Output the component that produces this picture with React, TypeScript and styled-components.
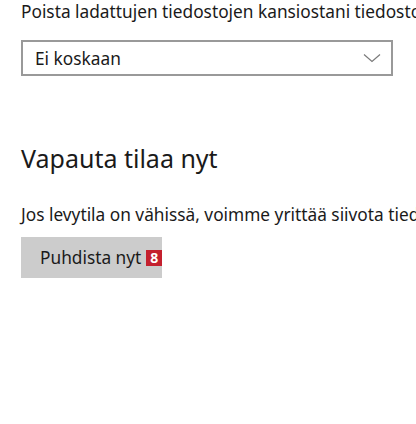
import React from 'react';
import styled, { createGlobalStyle } from 'styled-components';

const GlobalStyle = createGlobalStyle`
  html, body {
    margin: 0;
    padding: 0;
    background: #ffffff;
  }
  body {
    font-family: "Noto Sans", "Open Sans", sans-serif;
    color: #1a1a1a;
    overflow: hidden;
  }
`;

const Page = styled.div`
  width: 416px;
  height: 424px;
  padding: 0 0 0 21px;
  box-sizing: border-box;
  overflow: hidden;
  background: #ffffff;
`;

const Label = styled.div`
  font-size: 17.3px;
  line-height: 24px;
  white-space: nowrap;
  color: #1a1a1a;
`;

const Select = styled.div`
  margin-top: 16px;
  width: 372px;
  height: 36px;
  box-sizing: border-box;
  border: 2px solid #999999;
  display: flex;
  align-items: center;
  justify-content: space-between;
  padding: 0 10px 0 12px;
  font-size: 17.3px;
  color: #1a1a1a;
`;

const Chevron = styled.svg`
  width: 18px;
  height: 10px;
  flex: none;
`;

const Heading = styled.h2`
  margin: 66px 0 0;
  font-size: 25px;
  font-weight: 400;
  line-height: 32px;
  color: #1a1a1a;
`;

const Text = styled.p`
  margin: 29px 0 0;
  font-size: 17.3px;
  line-height: 24px;
  white-space: nowrap;
  color: #1a1a1a;
`;

const Button = styled.button`
  margin-top: 10px;
  width: 141px;
  height: 41px;
  border: none;
  background: #cccccc;
  font-family: inherit;
  font-size: 17.3px;
  color: #1a1a1a;
  display: flex;
  align-items: center;
  padding: 0 0 0 19px;
  gap: 5px;
  white-space: nowrap;
  cursor: pointer;
`;

const Badge = styled.span`
  display: inline-flex;
  align-items: center;
  justify-content: center;
  width: 16px;
  height: 16px;
  background: #c4202e;
  color: #ffffff;
  font-size: 14px;
  font-weight: 700;
  line-height: 16px;
`;

const App: React.FC = () => (
  <>
    <GlobalStyle />
    <Page>
      <Label>Poista ladattujen tiedostojen kansiostani tiedostot</Label>
      <Select>
        <span>Ei koskaan</span>
        <Chevron viewBox="0 0 18 10">
          <path d="M1 1.5 L9 8.5 L17 1.5" fill="none" stroke="#7a7a7a" strokeWidth="1.2" />
        </Chevron>
      </Select>
      <Heading>Vapauta tilaa nyt</Heading>
      <Text>Jos levytila on vähissä, voimme yrittää siivota tiedostoja</Text>
      <Button>
        <span>Puhdista nyt</span>
        <Badge>8</Badge>
      </Button>
    </Page>
  </>
);

export default App;
